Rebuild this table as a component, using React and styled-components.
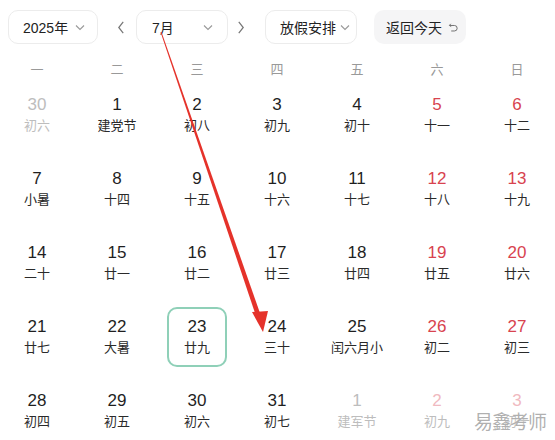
import styled, { createGlobalStyle } from 'styled-components';

const GlobalStyle = createGlobalStyle`
  html, body {
    margin: 0;
    padding: 0;
    background: #fff;
  }
  body {
    font-family: "Liberation Sans", "Noto Sans CJK SC", sans-serif;
    color: #222;
  }
`;

const Page = styled.div`
  position: relative;
  width: 555px;
  height: 440px;
  overflow: hidden;
  background: #fff;
`;

const Toolbar = styled.div`
  display: flex;
  align-items: center;
  padding: 10px 0 0 8px;
  height: 34px;
`;

const Select = styled.div`
  box-sizing: border-box;
  display: flex;
  align-items: center;
  justify-content: space-between;
  gap: 3px;
  width: ${p => p.w}px;
  height: 34px;
  padding: 0 ${p => p.pr || 12}px 0 ${p => p.pl || 15}px;
  border: 1px solid #ececec;
  border-radius: 10px;
  font-size: 14px;
  color: #222;
  margin-left: ${p => p.ml || 0}px;
`;

const Arrow = styled.div`
  width: 16px;
  display: flex;
  justify-content: center;
  color: #888;
  margin-left: ${p => p.ml || 0}px;
`;

const TodayBtn = styled.div`
  box-sizing: border-box;
  display: flex;
  align-items: center;
  gap: 6px;
  width: 92px;
  height: 34px;
  padding-left: 12px;
  margin-left: 17px;
  border-radius: 10px;
  background: #f5f5f6;
  font-size: 14px;
  color: #222;
`;

const Grid = styled.div`
  display: grid;
  grid-template-columns: repeat(7, 80px);
  width: 560px;
  margin-left: -3px;
`;

const WeekHead = styled.div`
  height: 20px;
  margin-top: 14px;
  display: flex;
  align-items: center;
  justify-content: center;
  font-size: 13px;
  color: #999;
`;

const Cell = styled.div`
  height: 74px;
  display: flex;
  align-items: center;
  justify-content: center;
`;

const Day = styled.div`
  box-sizing: border-box;
  width: 60px;
  height: 60px;
  display: flex;
  flex-direction: column;
  align-items: center;
  justify-content: center;
  border-radius: 10px;
  border: 2px solid ${p => (p.selected ? '#8fd0b8' : 'transparent')};
`;

const Num = styled.div`
  font-size: 17px;
  line-height: 20px;
  color: ${p => p.color};
`;

const Lunar = styled.div`
  font-size: 13px;
  line-height: 20px;
  margin-top: 1px;
  color: ${p => p.color};
  white-space: nowrap;
`;

const Watermark = styled.div`
  position: absolute;
  right: 9px;
  bottom: 6px;
  font-size: 19px;
  color: rgba(150, 150, 150, 0.75);
  letter-spacing: -1px;
  text-shadow: 0 0 1px #fff;
`;

const Overlay = styled.svg`
  position: absolute;
  left: 0;
  top: 0;
  pointer-events: none;
`;

const Chevron = ({ size = 10, dir = 'down', color = '#999' }) => {
  const d = {
    down: 'M1 3.5 L5 7.5 L9 3.5',
    left: 'M6.5 1 L2.5 6 L6.5 11',
    right: 'M2.5 1 L6.5 6 L2.5 11',
  }[dir];
  const vb = dir === 'down' ? '0 0 10 10' : '0 0 9 12';
  return (
    <svg width={dir === 'down' ? size : 10} height={dir === 'down' ? size : 15} viewBox={vb}>
      <path d={d} fill="none" stroke={color} strokeWidth="1.1" />
    </svg>
  );
};

const UndoIcon = () => (
  <svg width="11" height="11" viewBox="0 0 12 12">
    <path d="M3 2 L1.5 3.8 L3.5 5" fill="none" stroke="#666" strokeWidth="1" />
    <path d="M1.8 3.8 H7 A3 3 0 0 1 7 9.8 H3.5" fill="none" stroke="#666" strokeWidth="1" />
  </svg>
);

const BLACK = '#1f1f1f';
const RED = '#d8434f';
const GREY = '#bdbdbd';
const PINK = '#f0b9c0';

const weeks = ['一', '二', '三', '四', '五', '六', '日'];

const days = [
  ['30', '初六', 'out'], ['1', '建党节'], ['2', '初八'], ['3', '初九'], ['4', '初十'], ['5', '十一'], ['6', '十二'],
  ['7', '小暑'], ['8', '十四'], ['9', '十五'], ['10', '十六'], ['11', '十七'], ['12', '十八'], ['13', '十九'],
  ['14', '二十'], ['15', '廿一'], ['16', '廿二'], ['17', '廿三'], ['18', '廿四'], ['19', '廿五'], ['20', '廿六'],
  ['21', '廿七'], ['22', '大暑'], ['23', '廿九', 'sel'], ['24', '三十'], ['25', '闰六月小'], ['26', '初二'], ['27', '初三'],
  ['28', '初四'], ['29', '初五'], ['30', '初六'], ['31', '初七'], ['1', '建军节', 'out'], ['2', '初九', 'out'], ['3', '初十', 'out'],
];

export default function App() {
  return (
    <Page>
      <GlobalStyle />
      <Toolbar>
        <Select w={90} pl={14}>
          2025年 <Chevron />
        </Select>
        <Arrow ml={15}><Chevron dir="left" color="#777" /></Arrow>
        <Select w={92} ml={7} pl={15} pr={14}>
          7月 <Chevron />
        </Select>
        <Arrow ml={5}><Chevron dir="right" color="#777" /></Arrow>
        <Select w={92} ml={16} pl={14} pr={6}>
          放假安排 <Chevron />
        </Select>
        <TodayBtn>
          返回今天 <UndoIcon />
        </TodayBtn>
      </Toolbar>
      <Grid>
        {weeks.map(w => (
          <WeekHead key={w}>{w}</WeekHead>
        ))}
        {days.map(([n, l, flag], i) => {
          const weekend = i % 7 >= 5;
          const out = flag === 'out';
          const numColor = out ? (weekend ? PINK : GREY) : weekend ? RED : BLACK;
          const lunarColor = out ? GREY : '#2a2a2a';
          return (
            <Cell key={i}>
              <Day selected={flag === 'sel'}>
                <Num color={numColor}>{n}</Num>
                <Lunar color={lunarColor}>{l}</Lunar>
              </Day>
            </Cell>
          );
        })}
      </Grid>
      <Watermark>易鑫考师</Watermark>
      <Overlay width="555" height="440" viewBox="0 0 555 440">
        <polygon points="160.5,32 161.5,32 261,316 256.5,317.5" fill="#e5322a" />
        <polygon points="252,312 268,311 263,332" fill="#e5322a" />
      </Overlay>
    </Page>
  );
}
